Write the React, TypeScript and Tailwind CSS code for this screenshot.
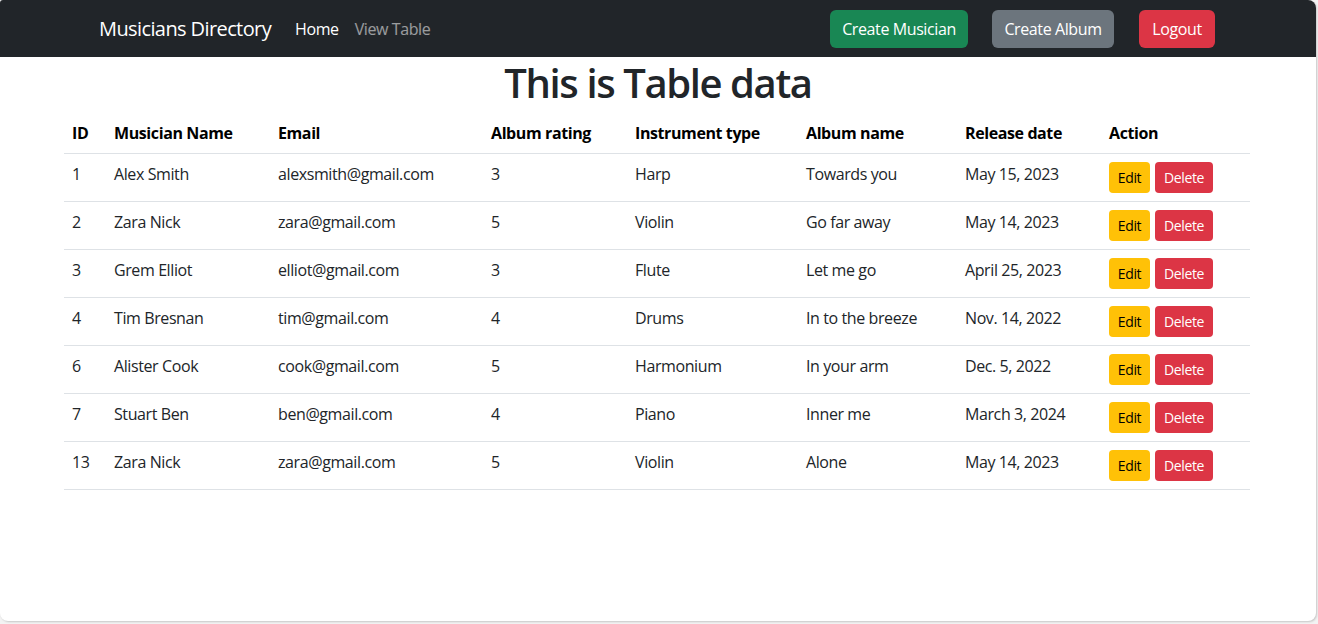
import React from 'react';

interface Row {
  id: number;
  name: string;
  email: string;
  rating: number;
  instrument: string;
  album: string;
  released: string;
}

const rows: Row[] = [
  { id: 1, name: 'Alex Smith', email: 'alexsmith@gmail.com', rating: 3, instrument: 'Harp', album: 'Towards you', released: 'May 15, 2023' },
  { id: 2, name: 'Zara Nick', email: 'zara@gmail.com', rating: 5, instrument: 'Violin', album: 'Go far away', released: 'May 14, 2023' },
  { id: 3, name: 'Grem Elliot', email: 'elliot@gmail.com', rating: 3, instrument: 'Flute', album: 'Let me go', released: 'April 25, 2023' },
  { id: 4, name: 'Tim Bresnan', email: 'tim@gmail.com', rating: 4, instrument: 'Drums', album: 'In to the breeze', released: 'Nov. 14, 2022' },
  { id: 6, name: 'Alister Cook', email: 'cook@gmail.com', rating: 5, instrument: 'Harmonium', album: 'In your arm', released: 'Dec. 5, 2022' },
  { id: 7, name: 'Stuart Ben', email: 'ben@gmail.com', rating: 4, instrument: 'Piano', album: 'Inner me', released: 'March 3, 2024' },
  { id: 13, name: 'Zara Nick', email: 'zara@gmail.com', rating: 5, instrument: 'Violin', album: 'Alone', released: 'May 14, 2023' },
];

const headers = [
  { label: 'ID', w: 'w-[42px]' },
  { label: 'Musician Name', w: 'w-[164px]' },
  { label: 'Email', w: 'w-[213px]' },
  { label: 'Album rating', w: 'w-[144px]' },
  { label: 'Instrument type', w: 'w-[171px]' },
  { label: 'Album name', w: 'w-[159px]' },
  { label: 'Release date', w: 'w-[144px]' },
  { label: 'Action', w: 'w-[149px]' },
];

function Navbar() {
  return (
    <nav className="h-[57px] bg-[#212529] rounded-tl-[3px] rounded-tr-[8px]">
      <div className="w-[1116px] ml-[99px] h-full flex items-center">
        <span className="text-[20px] text-white mr-4 leading-[30px] tracking-[-0.03em]">Musicians Directory</span>
        <a className="px-2 text-[16px] text-white">Home</a>
        <a className="px-2 text-[16px] text-white/55">View Table</a>
        <div className="ml-auto flex items-center">
          <button className="h-[38px] w-[138px] rounded-md bg-[#198754] text-white text-[16px]">Create Musician</button>
          <button className="ml-[24px] h-[38px] w-[122px] rounded-md bg-[#6c757d] text-white text-[16px]">Create Album</button>
          <button className="ml-[25px] h-[38px] w-[76px] rounded-md bg-[#dc3545] text-white text-[16px]">Logout</button>
        </div>
      </div>
    </nav>
  );
}

export default function App() {
  return (
    <div
      className="w-[1318px] h-[624px] bg-[#f3f3f3] tracking-[-0.025em]"
      style={{ fontFamily: '"Open Sans", "Noto Sans", sans-serif' }}
    >
      <div className="w-[1316px] h-[621px] bg-white rounded-tl-[3px] rounded-r-[8px] rounded-bl-[8px] shadow-[1px_1px_2px_rgba(0,0,0,0.18)] text-[#212529]">
        <Navbar />
        <h1 className="text-center text-[40px] font-semibold leading-[48px] mt-[2px] mb-[6px] tracking-[-0.035em]">
          This is Table data
        </h1>
        <table className="ml-[64px] w-[1186px] table-fixed border-collapse text-[16px] leading-6">
          <thead>
            <tr className="border-b border-[#dee2e6]">
              {headers.map((h) => (
                <th key={h.label} className={`${h.w} p-2 text-left font-bold text-black`}>
                  {h.label}
                </th>
              ))}
            </tr>
          </thead>
          <tbody>
            {rows.map((r) => (
              <tr key={r.id} className="border-b border-[#dee2e6] align-top">
                <td className="p-2">{r.id}</td>
                <td className="p-2">{r.name}</td>
                <td className="p-2">{r.email}</td>
                <td className="p-2">{r.rating}</td>
                <td className="p-2">{r.instrument}</td>
                <td className="p-2">{r.album}</td>
                <td className="p-2">{r.released}</td>
                <td className="p-2">
                  <div className="flex gap-[5px]">
                    <button className="h-[31px] w-[41px] rounded bg-[#ffc107] text-black text-[14px]">Edit</button>
                    <button className="h-[31px] w-[58px] rounded bg-[#dc3545] text-white text-[14px]">Delete</button>
                  </div>
                </td>
              </tr>
            ))}
          </tbody>
        </table>
      </div>
    </div>
  );
}
